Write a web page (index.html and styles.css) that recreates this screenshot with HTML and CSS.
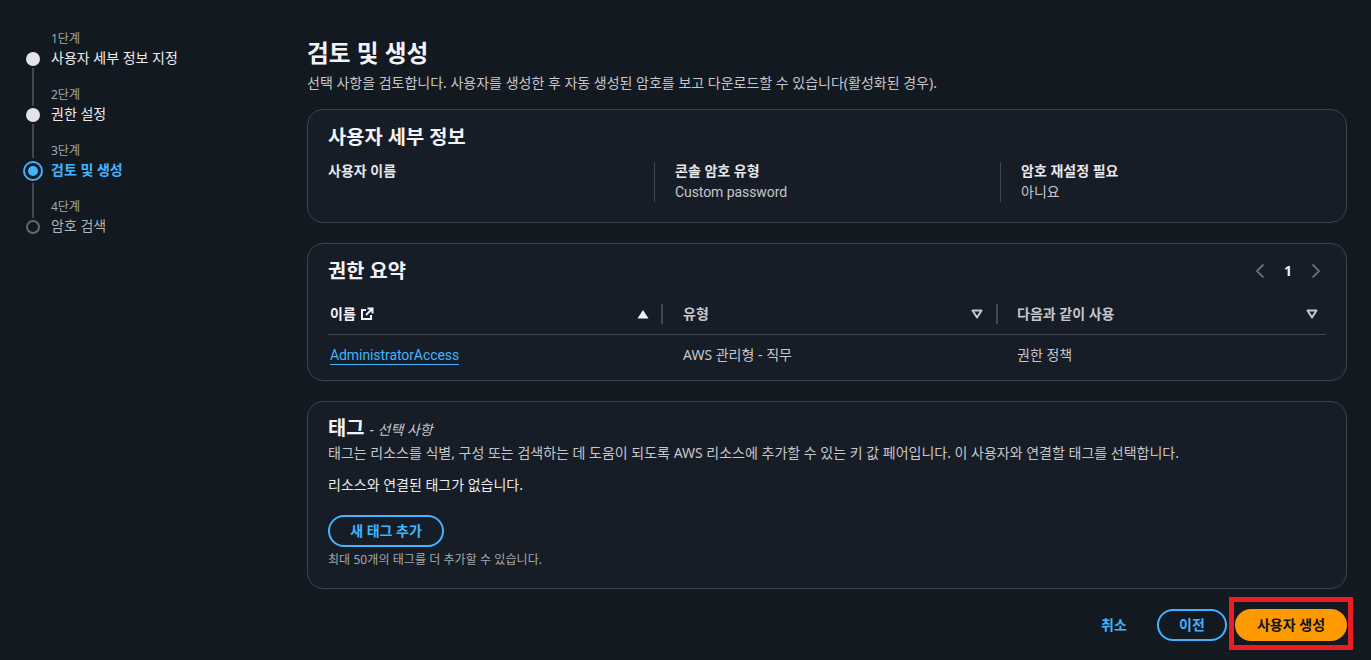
FILE: index.html
```html
<!DOCTYPE html>
<html lang="ko">
<head>
<meta charset="utf-8">
<title>검토 및 생성</title>
<link rel="stylesheet" href="styles.css">
</head>
<body>
<div class="layout">
  <nav class="steps">
    <div class="step done">
      <div class="marker"><span class="seg top none"></span><span class="dot"></span><span class="seg"></span></div>
      <div class="step-text"><div class="step-no">1단계</div><div class="step-name">사용자 세부 정보 지정</div></div>
    </div>
    <div class="step done">
      <div class="marker"><span class="seg top"></span><span class="dot"></span><span class="seg"></span></div>
      <div class="step-text"><div class="step-no">2단계</div><div class="step-name">권한 설정</div></div>
    </div>
    <div class="step active">
      <div class="marker"><span class="seg top"></span><span class="dot"></span><span class="seg"></span></div>
      <div class="step-text"><div class="step-no">3단계</div><div class="step-name">검토 및 생성</div></div>
    </div>
    <div class="step todo">
      <div class="marker"><span class="seg top"></span><span class="dot"></span></div>
      <div class="step-text"><div class="step-no">4단계</div><div class="step-name">암호 검색</div></div>
    </div>
  </nav>
  <main class="main">
    <h1 class="page-title">검토 및 생성</h1>
    <p class="page-desc">선택 사항을 검토합니다. 사용자를 생성한 후 자동 생성된 암호를 보고 다운로드할 수 있습니다(활성화된 경우).</p>

    <section class="card card-user">
      <h2 class="card-title">사용자 세부 정보</h2>
      <div class="kv-grid">
        <div class="kv"><div class="kv-key">사용자 이름</div></div>
        <div class="kv kv-sep"><div class="kv-key">콘솔 암호 유형</div><div class="kv-val latin">Custom password</div></div>
        <div class="kv kv-sep"><div class="kv-key">암호 재설정 필요</div><div class="kv-val">아니요</div></div>
      </div>
    </section>

    <section class="card card-perm">
      <div class="card-head">
        <h2 class="card-title">권한 요약</h2>
        <div class="pager">
          <svg class="chev" viewBox="0 0 10 16" width="10" height="16"><path d="M8.5 1.5 2 8l6.5 6.5"/></svg>
          <span class="page-num">1</span>
          <svg class="chev" viewBox="0 0 10 16" width="10" height="16"><path d="M1.5 1.5 8 8l-6.5 6.5"/></svg>
        </div>
      </div>
      <div class="table">
        <div class="t-row t-head">
          <div class="th th-first">
            <span class="th-label sorted">이름</span>
            <svg class="ext" viewBox="0 0 14 14" width="14" height="14"><path d="M6 3H2v9h9V8M7.500 1.500H12.500V6.500M12.500 1.500 6 8"/></svg>
            <svg class="sort-up" viewBox="0 0 12 10" width="12" height="10"><path d="M6 1 11.500 9.500H.5z"/></svg>
          </div>
          <div class="th">
            <span class="th-label">유형</span>
            <svg class="sort-down" viewBox="0 0 12 10" width="12" height="10"><path d="M1.500 1.500h9L6 8.500z"/></svg>
          </div>
          <div class="th th-last">
            <span class="th-label">다음과 같이 사용</span>
            <svg class="sort-down" viewBox="0 0 12 10" width="12" height="10"><path d="M1.500 1.500h9L6 8.500z"/></svg>
          </div>
        </div>
        <div class="t-row t-body">
          <div class="td td-first"><a class="link latin" href="#">AdministratorAccess</a></div>
          <div class="td">AWS 관리형 - 직무</div>
          <div class="td td-last">권한 정책</div>
        </div>
      </div>
    </section>

    <section class="card card-tags">
      <h2 class="card-title tags-title">태그 <span class="optional">- 선택 사항</span></h2>
      <p class="tags-desc">태그는 리소스를 식별, 구성 또는 검색하는 데 도움이 되도록 AWS 리소스에 추가할 수 있는 키 값 페어입니다. 이 사용자와 연결할 태그를 선택합니다.</p>
      <p class="tags-empty">리소스와 연결된 태그가 없습니다.</p>
      <button class="btn btn-outline tags-btn" type="button">새 태그 추가</button>
      <p class="tags-hint">최대 50개의 태그를 더 추가할 수 있습니다.</p>
    </section>

    <footer class="actions">
      <button class="btn btn-link" type="button">취소</button>
      <button class="btn btn-outline btn-prev" type="button">이전</button>
      <button class="btn btn-primary" type="button">사용자 생성</button>
    </footer>
  </main>
</div>
<div class="highlight"></div>
</body>
</html>
```

FILE: styles.css
```css
* { box-sizing: border-box; }
html, body { margin: 0; height: 660px; overflow: hidden; }
body {
  background: #131920;
  color: #dedee3;
  font-family: "Noto Sans", "Noto Sans CJK KR", sans-serif;
  font-size: 14px;
  line-height: 20px;
  position: relative;
}
.latin { font-family: Roboto, "Noto Sans", sans-serif; letter-spacing: -0.080px; }
.layout { display: flex; padding: 30px 24px 0 24px; }

/* steps */
.steps { width: 283px; flex: none; display: flex; flex-direction: column; }
.step { display: flex; height: 56px; }
.marker { width: 18px; margin-right: 9px; display: flex; flex-direction: column; align-items: center; }
.seg { width: 2px; flex: 1; margin-top: 2px; background: #424650; }
.active .seg { margin-top: 5px; }
.seg.top { flex: none; height: 20px; margin: 0 0 2px; }
.seg.none { background: transparent; }
.active .seg.top { height: 16px; margin: 0 0 6px; }
.dot { width: 14px; height: 14px; border-radius: 50%; flex: none; background: #e3e3e8; }
.active .dot { width: 10px; height: 10px; margin: 2px 0; background: #42b4ff; box-shadow: 0 0 0 3px #131920, 0 0 0 5px #42b4ff; }
.todo .dot { background: transparent; border: 2px solid #656871; }
.step-text { padding-top: 1px; }
.step-no { font-size: 12px; line-height: 16px; color: #a4a7ae; }
.step-name { font-size: 14px; line-height: 20px; margin-top: 1px; color: #ebebf0; white-space: nowrap; }
.active .step-name { color: #42b4ff; font-weight: 700; }
.todo .step-name { color: #b0b3ba; }

/* main */
.main { width: 1040px; flex: none; }
.page-title { margin: 6px 0 0; font-size: 23.700px; line-height: 34px; font-weight: 700; color: #f3f3f7; }
.page-desc { margin: 3px 0 0; line-height: 20px; font-size: 14px; color: #c6c6cd; white-space: nowrap; }

.card { background: #161d26; border: 1px solid #3f434b; border-radius: 16px; padding: 13px 20px 0; }
.card-user { margin-top: 16px; height: 114px; }
.card-perm { margin-top: 20px; height: 138px; }
.card-tags { margin-top: 20px; height: 188px; }
.card-title { margin: 0; font-size: 19.800px; line-height: 28px; font-weight: 700; color: #f3f3f7; white-space: nowrap; }

.kv-grid { display: grid; grid-template-columns: 326px 346px 1fr; margin-top: 11px; }
.kv { height: 40px; }
.kv-sep { border-left: 1px solid #424650; padding-left: 20px; }
.kv-key { font-weight: 700; color: #e6e6eb; line-height: 20px; margin-top: -1px; }
.kv-val { color: #c6c6cd; line-height: 20px; margin-top: 1px; }

.card-head { display: flex; justify-content: space-between; align-items: center; }
.pager { display: flex; align-items: center; gap: 19px; margin-right: 5px; }
.chev { fill: none; stroke: #656871; stroke-width: 2; }
.page-num { font-weight: 700; font-size: 14px; color: #f3f3f7; width: 8px; text-align: center; }

.table { margin-top: 19px; }
.t-row { display: grid; grid-template-columns: 335px 335px 1fr; }
.t-head { height: 31px; border-bottom: 1px solid #424650; }
.th { display: flex; align-items: center; height: 20px; padding: 0 13px 0 20px; font-weight: 700; color: #c6c6cd; white-space: nowrap; justify-content: space-between; border-right: 2px solid #424650; }
.th-first { padding: 0 12px 0 2px; justify-content: flex-start; color: #f3f3f7; }
.th-last { padding: 0 8px 0 19px; border-right: 0; }
.th-label.sorted { color: #f3f3f7; }
.ext { margin-left: 4px; fill: none; stroke: #f3f3f7; stroke-width: 2; }
.sort-up { margin-left: auto; fill: #f3f3f7; }
.sort-down { fill: none; stroke: #c6c6cd; stroke-width: 2; stroke-linejoin: round; }
.t-body { height: 40px; align-items: center; }
.td { padding-left: 20px; color: #c6c6cd; white-space: nowrap; }
.td-first { padding-left: 2px; }
.td-last { padding-left: 19px; }
.link { color: #42b4ff; text-decoration: none; border-bottom: 1px solid #42b4ff; display: inline-block; line-height: 18px; }

.tags-title { line-height: 28px; margin: -1px 0 -1px; }
.optional { font-size: 14px; font-weight: 400; font-style: italic; color: #c6c6cd; }
.tags-desc { margin: 0; font-size: 14px; color: #c6c6cd; white-space: nowrap; line-height: 20px; }
.tags-empty { margin: 12px 0 0; font-size: 14px; color: #ebebf0; line-height: 20px; }
.tags-btn { margin-top: 20px; width: 116px; }
.tags-hint { margin: 5px 0 0; font-size: 12px; line-height: 16px; letter-spacing: 0.070px; color: #a4a7ae; }

.btn { height: 32px; border-radius: 16px; font: inherit; font-weight: 700; font-size: 14px; line-height: 20px; padding: 0; background: none; border: 2px solid transparent; cursor: pointer; display: block; }
.btn-outline { border-color: #42b4ff; color: #42b4ff; }
.btn-link { color: #42b4ff; width: 70px; }
.btn-prev { width: 70px; }
.btn-primary { background: #ff9900; border-color: #ff9900; color: #0f141a; width: 112px; }
.actions { display: flex; justify-content: flex-end; align-items: center; gap: 8px; margin-top: 20px; }

.highlight { position: absolute; left: 1229px; top: 597px; width: 124px; height: 53px; border: 5px solid #ec1c24; pointer-events: none; }
```
